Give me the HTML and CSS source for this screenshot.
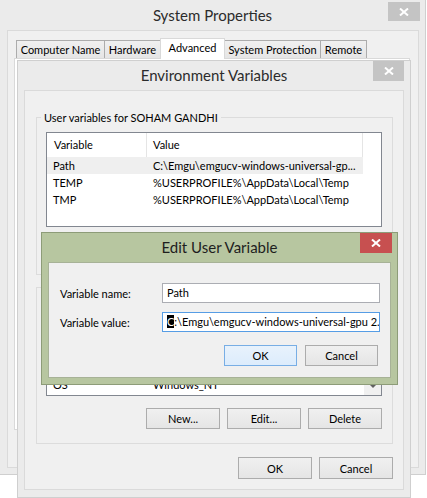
FILE: index.html
```html
<!DOCTYPE html>
<html>
<head>
<meta charset="utf-8">
<title>Environment Variables</title>
<link rel="stylesheet" href="styles.css">
</head>
<body>
<section class="win win-sys">
  <header class="titlebar">
    <span></span>
    <h1 class="title">System Properties</h1>
    <div class="close close-inactive"><svg width="10" height="8" viewBox="0 0 10 8"><path d="M1 0.5 L9 7.5 M9 0.5 L1 7.5" stroke="#fff" stroke-width="2"/></svg></div>
  </header>
  <div class="client sys-client">
    <div class="tabs">
      <div class="tab t-cn">Computer Name</div>
      <div class="tab t-hw">Hardware</div>
      <div class="tab t-adv active">Advanced</div>
      <div class="tab t-sp">System Protection</div>
      <div class="tab t-rm">Remote</div>
    </div>
    <div class="tabpanel"></div>
  </div>
</section>

<section class="win win-env">
  <header class="titlebar">
    <span></span>
    <h1 class="title">Environment Variables</h1>
    <div class="close close-inactive"><svg width="10" height="8" viewBox="0 0 10 8"><path d="M1 0.5 L9 7.5 M9 0.5 L1 7.5" stroke="#fff" stroke-width="2"/></svg></div>
  </header>
  <div class="client env-client">
    <fieldset class="group">
      <legend>User variables for SOHAM GANDHI</legend>
      <div class="listview">
        <div class="lv-main">
          <div class="lv-head">
            <div class="col c1">Variable</div>
            <div class="col c2">Value</div>
          </div>
          <div class="lv-row selected"><div class="col c1">Path</div><div class="col c2">C:\Emgu\emgucv-windows-universal-gp...</div></div>
          <div class="lv-row"><div class="col c1">TEMP</div><div class="col c2">%USERPROFILE%\AppData\Local\Temp</div></div>
          <div class="lv-row"><div class="col c1">TMP</div><div class="col c2">%USERPROFILE%\AppData\Local\Temp</div></div>
        </div>
      </div>
      <div class="btnrow">
        <button class="btn">New...</button>
        <button class="btn">Edit...</button>
        <button class="btn">Delete</button>
      </div>
    </fieldset>
    <fieldset class="group group-sys">
      <legend>System variables</legend>
      <div class="listview">
        <div class="lv-main">
          <div class="lv-head">
            <div class="col c1">Variable</div>
            <div class="col c2">Value</div>
          </div>
          <div class="lv-row"><div class="col c1">ComSpec</div><div class="col c2">C:\Windows\system32\cmd.exe</div></div>
          <div class="lv-row"><div class="col c1">FP_NO_HOST_C...</div><div class="col c2">NO</div></div>
          <div class="lv-row"><div class="col c1">NUMBER_OF_P...</div><div class="col c2">4</div></div>
          <div class="lv-row"><div class="col c1">OS</div><div class="col c2">Windows_NT</div></div>
        </div>
        <div class="lv-scroll"><span class="arrow-down"></span></div>
      </div>
      <div class="btnrow">
        <button class="btn">New...</button>
        <button class="btn">Edit...</button>
        <button class="btn">Delete</button>
      </div>
    </fieldset>
    <div class="btnrow dialog-btns">
      <button class="btn">OK</button>
      <button class="btn">Cancel</button>
    </div>
  </div>
</section>

<section class="win win-edit">
  <header class="titlebar">
    <span></span>
    <h1 class="title">Edit User Variable</h1>
    <div class="close close-active"><svg width="10" height="8" viewBox="0 0 10 8"><path d="M1 0.5 L9 7.5 M9 0.5 L1 7.5" stroke="#fff" stroke-width="2"/></svg></div>
  </header>
  <div class="client edit-client">
    <div class="form">
      <label class="lbl">Variable name:</label>
      <div class="textbox">Path</div>
      <label class="lbl">Variable value:</label>
      <div class="textbox focused"><span class="sel">C</span>:\Emgu\emgucv-windows-universal-gpu 2.</div>
    </div>
    <div class="btnrow edit-btns">
      <button class="btn btn-default">OK</button>
      <button class="btn">Cancel</button>
    </div>
  </div>
</section>
</body>
</html>
```

FILE: styles.css
```css
* { box-sizing: border-box; }
html, body { margin: 0; padding: 0; }
body {
  width: 427px;
  height: 498px;
  overflow: hidden;
  position: relative;
  background: #ffffff;
  font-family: Lato, "Liberation Sans", sans-serif;
  font-size: 11px;
  color: #000;
}

/* windows */
.win {
  position: absolute;
  display: flex;
  flex-direction: column;
  background: #ebebeb;
  border: 1px solid #cfcfcf;
}
.win-sys { left: -1px; top: -1px; width: 427px; height: 476px; }
.win-env { left: 17px; top: 60px; width: 394px; height: 438px; }
.win-edit { left: 41px; top: 232px; width: 357px; height: 153px; background: #b7c6a0; border-color: #8d9c78; }

.titlebar {
  flex: none;
  display: grid;
  grid-template-columns: 1fr auto 1fr;
  align-items: start;
}
.win-sys .titlebar { height: 30px; }
.win-env .titlebar, .win-edit .titlebar { height: 29px; }

.title {
  margin: 0;
  font-weight: normal;
  font-size: 15px;
  color: #2b2b2b;
  white-space: nowrap;
}
.win-sys .title { line-height: 31px; }
.win-env .title, .win-edit .title { line-height: 29px; }
.win-edit .title { color: #1e1e1e; }

.close {
  justify-self: end;
  display: flex;
  align-items: center;
  justify-content: center;
}
.close-inactive { background: #c4c4c4; }
.close-active { background: #c75050; }
.win-sys .close { width: 32px; height: 19px; margin: 2px 5px 0 0; }
.win-env .close { width: 31px; height: 20px; margin-right: 6px; }
.win-edit .close { width: 32px; height: 20px; margin-right: 5px; }

.client {
  flex: 1;
  background: #f0f0f0;
  border: 1px solid #dadada;
}

/* System Properties */
.sys-client { margin: 0 6px 6px 7px; padding: 7px 0 0 6px; }
.tabs {
  display: flex;
  align-items: flex-end;
  height: 20px;
  margin-left: 2px;
  position: relative;
}
.tab {
  height: 18px;
  line-height: 18px;
  text-align: center;
  border: 1px solid #acacac;
  border-bottom: 0;
  background: linear-gradient(#f0f0f0, #e5e5e5);
  margin-right: -1px;
  white-space: nowrap;
}
.tab.active {
  height: 21px;
  margin-bottom: -1px;
  background: #ffffff;
  border-color: #d9d9d9;
  line-height: 17px;
  z-index: 1;
  position: relative;
}
.t-cn { width: 89px; }
.t-hw { width: 57px; }
.t-adv { width: 65px; }
.t-sp { width: 97px; }
.t-rm { width: 47px; }
.tabpanel {
  width: 396px;
  height: 372px;
  background: #ffffff;
  border: 1px solid #d9d9d9;
}

/* Environment Variables */
.env-client { margin: 0 6px 7px 6px; }
.group {
  margin: 19px 10px 0 11px;
  padding: 0 10px 14px 9px;
  border: 1px solid #dcdcdc;
  min-width: 0;
}
.group legend {
  padding: 0 3px;
  margin-left: -5px;
  line-height: 15px;
  color: #000;
}
.group-sys { margin-top: 5px; }
.listview {
  margin-top: 7px;
  height: 95px;
  border: 1px solid #828790;
  background: #ffffff;
  display: flex;
  overflow: hidden;
}
.group-sys .listview { margin-top: 6px; }
.lv-main { flex: 1; }
.lv-head { display: flex; height: 24px; align-items: stretch; }
.lv-head .col { line-height: 24px; border-right: 1px solid #e5e5e5; }
.lv-head .c1 { padding-left: 7px; }
.group-sys .lv-head { height: 23px; }
.group-sys .lv-head .col { line-height: 23px; }
.lv-row { display: flex; height: 17px; line-height: 17px; }
.col { white-space: nowrap; overflow: hidden; padding-left: 6px; }
.c1 { width: 100px; flex: none; }
.c2 { width: 216px; flex: none; }
.lv-row.selected .col { background: #efefef; }
.lv-scroll {
  width: 17px;
  background: #f0f0f0;
  display: flex;
  flex-direction: column;
  justify-content: flex-end;
  align-items: center;
  padding-bottom: 7px;
}
.arrow-down {
  width: 0; height: 0;
  border-left: 3px solid transparent;
  border-right: 3px solid transparent;
  border-top: 3px solid #606060;
}

.btnrow {
  display: flex;
  justify-content: flex-end;
  gap: 7px;
  margin-top: 12px;
}
.btn {
  width: 74px;
  height: 21px;
  padding: 0;
  font-family: inherit;
  font-size: 11px;
  color: #000;
  border: 1px solid #acacac;
  background: linear-gradient(#f0f0f0, #e5e5e5);
}
.dialog-btns { margin: 13px 10px 0 0; }
.dialog-btns .btn { height: 22px; }

/* Edit User Variable */
.edit-client { margin: 0 6px 6px 6px; padding: 20px 10px 0 11px; border-color: #a7b297; }
.form {
  display: grid;
  grid-template-columns: 102px 218px;
  row-gap: 9px;
  align-items: center;
}
.lbl { white-space: nowrap; }
.textbox {
  height: 20px;
  line-height: 18px;
  padding: 0 4px;
  border: 1px solid #abadb3;
  background: #ffffff;
  white-space: nowrap;
  overflow: hidden;
}
.textbox.focused { border-color: #569de5; }
.sel { background: #000; color: #fff; }
.edit-btns { margin: 13px 2px 0 0; gap: 8px; }
.edit-btns .btn { width: 73px; }
.btn-default { border-color: #78aee5; background: linear-gradient(#e8f2fc, #dcecfc); }
```
